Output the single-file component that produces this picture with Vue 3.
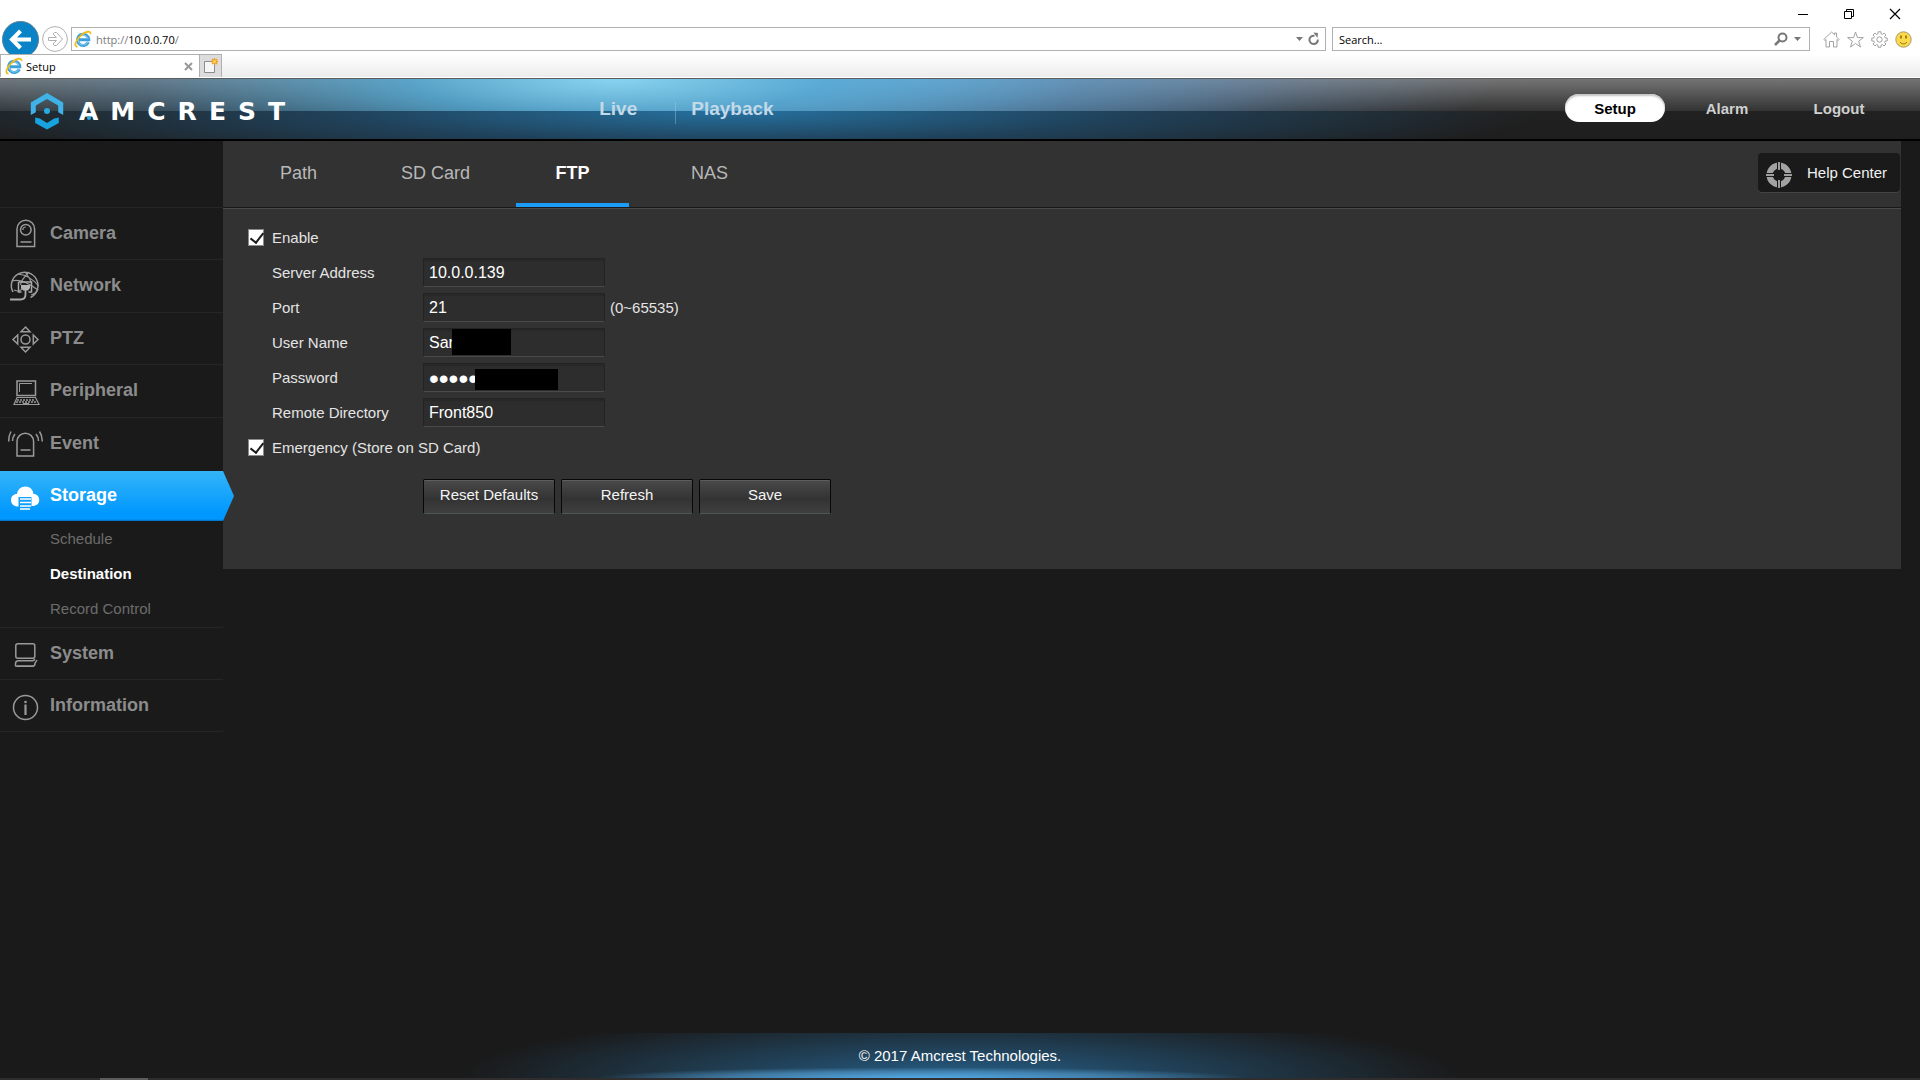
<script setup>
import { ref } from 'vue'

const brand = 'AMCREST'.split('')

const menuTop = ['Camera', 'Network', 'PTZ', 'Peripheral', 'Event', 'Storage', 'System', 'Information']
const submenu = ['Schedule', 'Destination', 'Record Control']
const tabs = ['Path', 'SD Card', 'FTP', 'NAS']

const activeMenu = 'Storage'
const activeSub = 'Destination'
const activeTab = 'FTP'

const address = ref('http://10.0.0.70/')
const form = ref({
  enable: true,
  server: '10.0.0.139',
  port: '21',
  user: 'San',
  password: '12345',
  directory: 'Front850',
  emergency: true,
})
</script>

<template>
  <div class="screen">
    <div class="browser">
      <div class="titlebar">
        <button class="win" aria-label="Minimize">
          <svg width="12" height="12" viewBox="0 0 12 12"><path d="M1 6.5h10" stroke="#000" /></svg>
        </button>
        <button class="win" aria-label="Restore">
          <svg width="12" height="12" viewBox="0 0 12 12" fill="none" stroke="#000"><path d="M1.5 3.5h7v7h-7zM3.5 3.5v-2h7v7h-2" /></svg>
        </button>
        <button class="win" aria-label="Close">
          <svg width="12" height="12" viewBox="0 0 12 12"><path d="M1 1l10 10M11 1L1 11" stroke="#000" stroke-width="1.2" /></svg>
        </button>
      </div>

      <div class="navrow">
        <button class="back" aria-label="Back">
          <svg width="37" height="37" viewBox="0 0 37 37">
            <circle cx="18.5" cy="18.5" r="18" fill="#0a84c6" stroke="#5b7f95" />
            <path d="M29 18.500H11M18.500 10l-8.500 8.500 8.500 8.500" fill="none" stroke="#fff" stroke-width="4" />
          </svg>
        </button>
        <button class="forward" aria-label="Forward">
          <svg width="26" height="26" viewBox="0 0 26 26" fill="none" stroke="#b0b0b0">
            <circle cx="13" cy="13" r="12.400" />
            <path d="M6.500 11.500h8l-3.500-3.500 1.500-1.500h2l6 6.500-6 6.500h-2l-1.500-1.500 3.500-3.500h-8z" />
          </svg>
        </button>
        <div class="field url">
          <svg class="ie" width="18" height="18" viewBox="0 0 18 18" fill="none">
            <path d="M14.300 12.200A5.600 5.600 0 1 1 14.800 9.800H5" stroke="#3a9fdc" stroke-width="3" />
            <path d="M13.800 11.900A5 5 0 1 1 14 8.800" stroke="#8dd0f5" />
            <path d="M3.500 16.500C-.5 17 1.500 10.500 6.500 5.800S17 .2 16.600 4.200" stroke="#f0bd1d" stroke-width="1.800" />
          </svg>
          <label class="urltext" for="address"><span>http://</span>10.0.0.70<span>/</span></label>
          <input id="address" v-model="address" class="ghost" aria-label="Address" />
          <svg width="9" height="6" viewBox="0 0 9 6"><path d="M1 1h7l-3.500 4z" fill="#777" /></svg>
          <svg width="12" height="14" viewBox="0 0 12 14" fill="none"><path d="M9.800 7.500A4.200 4.200 0 1 1 6.500 3.800" stroke="#777" stroke-width="2" /><path d="M5.500 .5l4.500 .5-.5 5z" fill="#777" /></svg>
        </div>
        <div class="field search">
          <input type="text" placeholder="Search..." aria-label="Search" />
          <svg width="14" height="14" viewBox="0 0 14 14" fill="none" stroke="#777" stroke-width="2"><circle cx="8.500" cy="5.500" r="4" /><path d="M5.500 8.500L1 13" stroke-width="2.500" /></svg>
          <svg width="9" height="6" viewBox="0 0 9 6"><path d="M1 1h7l-3.500 4z" fill="#777" /></svg>
        </div>
        <div class="tools">
          <button aria-label="Home">
            <svg width="17" height="17" viewBox="0 0 17 17" fill="#fff" stroke="#a3a3a3"><path d="M.8 8.500L8.500 1l3 2.800V2h2v3.800l2.700 2.700-1 1-1.200-1V16h-3.500v-5.500h-4V16H3V8.500l-1.200 1z" /></svg>
          </button>
          <button aria-label="Favorites">
            <svg width="17" height="17" viewBox="0 0 17 17" fill="#fff" stroke="#a3a3a3"><path d="M8.500 1l2 5.600h5.900l-4.700 3.600 1.800 5.800-5-3.500-5 3.500 1.800-5.800L.6 6.600h5.900z" /></svg>
          </button>
          <button aria-label="Tools">
            <svg width="17" height="17" viewBox="0 0 17 17" fill="#fff" stroke="#a3a3a3"><path d="M7 .8h3v2l1.500.6L13 2l2 2-1.400 1.500.6 1.500h2v3h-2l-.6 1.500L15 13l-2 2-1.500-1.400-1.500.6v2H7v-2l-1.500-.6L4 15l-2-2 1.400-1.500L2.800 10h-2V7h2l.6-1.500L2 4l2-2 1.500 1.400L7 2.800z" /><circle cx="8.500" cy="8.500" r="2.700" /></svg>
          </button>
          <button aria-label="Feedback">
            <svg width="17" height="17" viewBox="0 0 17 17"><circle cx="8.500" cy="8.500" r="7.700" fill="#fbd94a" stroke="#a59b6e" /><path d="M6 4.500v3M11 4.500v3" stroke="#8a6d12" stroke-width="1.600" /><path d="M5 11c2 2.500 5 2.500 7 0" fill="none" stroke="#8a6d12" /></svg>
          </button>
        </div>
      </div>

      <div class="tabstrip">
        <div class="pagetab">
          <svg class="ie" width="18" height="18" viewBox="0 0 18 18" fill="none">
            <path d="M14.300 12.200A5.600 5.600 0 1 1 14.800 9.800H5" stroke="#3a9fdc" stroke-width="3" />
            <path d="M13.800 11.900A5 5 0 1 1 14 8.800" stroke="#8dd0f5" />
            <path d="M3.500 16.500C-.5 17 1.500 10.500 6.500 5.800S17 .2 16.600 4.200" stroke="#f0bd1d" stroke-width="1.800" />
          </svg>
          <span>Setup</span>
          <button aria-label="Close tab">
            <svg width="9" height="9" viewBox="0 0 9 9"><path d="M1 1l7 7M8 1L1 8" stroke="#999" stroke-width="2" /></svg>
          </button>
        </div>
        <button class="newtab" aria-label="New tab">
          <svg width="16" height="18" viewBox="0 0 16 18" fill="none"><path d="M1.500 4.500h10v11h-10z" fill="#f6f6f6" stroke="#8d8d8d" /><path d="M11.500 1v7M8 4.500h7M9 2l5 5M14 2L9 7" stroke="#ef9a1a" stroke-width="1.300" /><circle cx="11.500" cy="4.500" r="1.500" fill="#ffd75a" /></svg>
        </button>
      </div>
    </div>

    <header class="header">
      <a class="logo" href="#" aria-label="Amcrest">
        <svg width="34" height="38" viewBox="0 0 34 38">
          <path d="M.8 23V10.500L17 1l16.200 9.500V23l-5-2.800v-6.700L17 7 5.800 13.500v6.700z" fill="#3fb2e8" />
          <path d="M5.200 25.500l4.600 1L17 31l7.200-4.500 4.600-1V31L17 37.500 5.200 31z" fill="#16a3e0" />
          <circle cx="17" cy="19" r="3" fill="#2aa9e3" />
        </svg>
        <span class="brand"><span v-for="(c, i) in brand" :key="i">{{ c }}</span></span>
      </a>
      <nav class="views">
        <a href="#">Live</a>
        <a href="#">Playback</a>
      </nav>
      <nav class="account">
        <a class="on" href="#">Setup</a>
        <a href="#">Alarm</a>
        <a href="#">Logout</a>
      </nav>
    </header>

    <div class="body">
      <aside class="sidebar">
        <ul class="menu">
          <li v-for="item in menuTop" :key="item">
            <a class="item" :class="{ active: item === activeMenu }" href="#">
              <svg class="icon" width="36" height="36" viewBox="0 0 36 36" fill="none" stroke="#9a9a9a" stroke-width="1.500">
                <template v-if="item === 'Camera'">
                  <path d="M9 30.500V13a8.800 8.800 0 0 1 17.600 0v17.500z" />
                  <circle cx="17.800" cy="13.800" r="5.300" />
                  <path d="M14.800 14a3 3 0 0 1 3-3" stroke-width="1.200" />
                  <path d="M12.500 26h11" />
                </template>
                <template v-else-if="item === 'Network'">
                  <path d="M5 24a13.300 13.300 0 1 1 17.500 5.500" />
                  <path d="M4 13c7-2 15 1 26 9M10 6c8 1 16 6 20.500 12M21 4c-5 5-8 9-8.500 13M17 4c4 5 6 8 6.500 12M6 22c5 2 7 1 9-3M23 27c4-1 6-3 7-6" stroke-width="1.200" />
                  <path d="M10.500 14h13v10h-3M10.500 14v10h3" stroke="#aaa" />
                  <path d="M13 17h9v3l-2 2.500h-5L13 20z" fill="#b5b5b5" stroke="none" />
                  <path d="M17.500 22v4.500q0 5-5 5H2" stroke="#aaa" stroke-width="1.800" />
                </template>
                <template v-else-if="item === 'PTZ'">
                  <circle cx="17.500" cy="18.500" r="4.500" />
                  <path d="M17.500 6l4.500 4.700h-9zM17.500 31l4.500-4.700h-9zM5 18.500l4.700-4.500v9zM30 18.500l-4.700-4.500v9z" />
                </template>
                <template v-else-if="item === 'Peripheral'">
                  <path d="M9 8h18.500v14.500H9z" />
                  <path d="M11.500 19v-8.500H24" stroke-width="1" />
                  <path d="M9 24.500h18.500l3.500 7H6z" stroke-width="1.200" />
                  <path d="M9 27h18M8 29h20" stroke-width="1.500" stroke-dasharray="2 1" />
                  <path d="M15 31h6" stroke-width="2" />
                </template>
                <template v-else-if="item === 'Event'">
                  <path d="M9 30V15.500a8.300 8.300 0 0 1 16.600 0V30z" />
                  <path d="M12.500 24h10M7 8q-2.500 3-2.500 7M3 5.500Q.5 10 .8 15.500M28 8q2.500 3 2.500 7M31.500 5.500q3 4.500 2.700 10" />
                </template>
                <template v-else-if="item === 'Storage'">
                  <path d="M9 28.500C5.500 28 3 25.500 3 22s2.500-6 6-6c.5-4.500 4-7.500 8.500-7.500S25 11.500 25.500 16c3.500 0 5.700 2.500 5.700 6S29 27.500 25.500 28h-2v-9H10.500v9.500z" fill="#fff" stroke="none" />
                  <path d="M12 21h11M12 24.500h11M12 28h11M12 31h10" stroke="#fff" stroke-width="1.500" />
                </template>
                <template v-else-if="item === 'System'">
                  <rect x="7.800" y="7.800" width="19" height="14.500" rx="2" />
                  <path d="M7.500 30.200v-2.500q0-3 3-3h14q2 0 2-2M9 30.200h15.500q2.500 0 2.500-3l2-3" />
                  <path d="M7.500 30.200h18" />
                </template>
                <template v-else>
                  <circle cx="17.500" cy="19.500" r="12" />
                  <path d="M17.500 16.500V27" stroke-width="2.200" />
                  <circle cx="17.500" cy="14" r="1.300" fill="#9a9a9a" stroke="none" />
                </template>
              </svg>
              <span>{{ item }}</span>
            </a>
            <ul v-if="item === activeMenu" class="submenu">
              <li v-for="s in submenu" :key="s"><a href="#" :class="{ on: s === activeSub }">{{ s }}</a></li>
            </ul>
          </li>
        </ul>
      </aside>

      <main class="panel">
        <div class="tabbar">
          <nav class="tabs">
            <a v-for="t in tabs" :key="t" href="#" :class="{ on: t === activeTab }">{{ t }}</a>
          </nav>
          <button class="help">
            <svg width="28" height="28" viewBox="0 0 28 28" fill="none">
              <circle cx="14" cy="14" r="9.500" stroke="#a2a2a2" stroke-width="6" />
              <path d="M14 1v8M14 19v8M1 14h8M19 14h8" stroke="#1a1a1a" stroke-width="4" />
              <path d="M14 1v8M14 19v8M1 14h8M19 14h8" stroke="#c8c8c8" stroke-width="1.500" />
            </svg>
            Help Center
          </button>
        </div>

        <form class="form" @submit.prevent>
          <div class="row check">
            <input id="enable" v-model="form.enable" type="checkbox" />
            <label for="enable">Enable</label>
          </div>
          <div class="row">
            <label for="server">Server Address</label>
            <div class="control"><input id="server" v-model="form.server" type="text" /></div>
          </div>
          <div class="row">
            <label for="port">Port</label>
            <div class="control"><input id="port" v-model="form.port" type="text" /></div>
            <span class="hint">(0~65535)</span>
          </div>
          <div class="row">
            <label for="user">User Name</label>
            <div class="control"><input id="user" v-model="form.user" type="text" /><span class="mask mask-user"></span></div>
          </div>
          <div class="row">
            <label for="password">Password</label>
            <div class="control"><input id="password" v-model="form.password" type="password" /><span class="mask mask-password"></span></div>
          </div>
          <div class="row">
            <label for="directory">Remote Directory</label>
            <div class="control"><input id="directory" v-model="form.directory" type="text" /></div>
          </div>
          <div class="row check">
            <input id="emergency" v-model="form.emergency" type="checkbox" />
            <label for="emergency">Emergency (Store on SD Card)</label>
          </div>
          <div class="actions">
            <button type="button">Reset Defaults</button>
            <button type="button">Refresh</button>
            <button type="submit">Save</button>
          </div>
        </form>
      </main>
    </div>

    <footer class="footer">© 2017 Amcrest Technologies.</footer>
    <div class="taskbar"><span></span></div>
  </div>
</template>

<style>
body {
  margin: 0;
  background: #1a1a1a;
}
</style>

<style scoped>
* {
  box-sizing: border-box;
}
.screen {
  display: flex;
  flex-direction: column;
  min-height: 100vh;
  font: 15px "Liberation Sans", Arial, sans-serif;
  color: #e4e4e4;
  background: #1a1a1a;
}
a {
  color: inherit;
  text-decoration: none;
}
button {
  padding: 0;
  border: 0;
  background: none;
  color: inherit;
  font: inherit;
}
ul {
  margin: 0;
  padding: 0;
  list-style: none;
}
svg {
  display: block;
  flex: none;
}

/* Browser frame */
.browser {
  background: #fff;
  color: #000;
  font: 11px "Open Sans", "Noto Sans", sans-serif;
}
.titlebar {
  display: flex;
  justify-content: flex-end;
  height: 27px;
  padding-right: 2px;
}
.win {
  display: grid;
  place-items: center;
  width: 46px;
  height: 28px;
}
.navrow {
  display: flex;
  align-items: center;
  height: 24px;
  padding: 0 5px 0 2px;
}
.back {
  margin-right: 3px;
}
.forward {
  margin-right: 3px;
}
.field {
  position: relative;
  display: flex;
  align-items: center;
  height: 24px;
  border: 1px solid #b0b0b0;
  background: #fff;
}
.url {
  flex: 1;
  gap: 4px;
  padding: 0 5px 0 2px;
}
.urltext span {
  color: #7a7a7a;
}
.field input {
  flex: 1;
  min-width: 0;
  padding: 0;
  border: 0;
  outline: 0;
  background: none;
  font: inherit;
}
.field .ghost {
  color: transparent;
  text-indent: 100%;
  overflow: hidden;
}
.search {
  width: 478px;
  gap: 5px;
  margin: 0 9px 0 6px;
  padding: 0 7px 0 6px;
}
.search input::placeholder {
  color: #000;
  opacity: 1;
}
.tools {
  display: flex;
}
.tools button {
  display: grid;
  place-items: center;
  width: 24px;
  height: 24px;
}
.tabstrip {
  position: relative;
  display: flex;
  height: 24px;
  margin-top: 3px;
  border-bottom: 1px solid #fff;
  background: linear-gradient(#fff, #ececec);
}
.pagetab {
  display: flex;
  align-items: center;
  gap: 3px;
  width: 200px;
  padding: 0 6px 0 4px;
  border: 1px solid #b0b0b0;
  border-bottom: 0;
  background: #fff;
}
.pagetab span {
  flex: 1;
}
.newtab {
  display: grid;
  place-items: center;
  width: 22px;
  border: 1px solid #b0b0b0;
  border-left: 0;
  border-bottom: 0;
  background: #dcdcdc;
}

/* Site header */
.header {
  position: relative;
  display: flex;
  align-items: center;
  justify-content: space-between;
  height: 63px;
  padding: 0 31px 0 30px;
  border-top: 1px solid #5c5c5c;
  border-bottom: 2px solid #000;
  background:
    radial-gradient(ellipse 36% 400% at 32% 0, rgba(136, 214, 242, .96), rgba(84, 176, 222, .78) 30%, rgba(76, 140, 185, .35) 68%, transparent) 0 0 / 100% 32px no-repeat,
    radial-gradient(ellipse 30% 300% at 48% 0, rgba(120, 185, 240, .7), rgba(110, 165, 220, .4) 50%, transparent) 0 0 / 100% 32px no-repeat,
    radial-gradient(ellipse 42% 230% at 38% 0, rgba(38, 116, 164, .97), rgba(32, 84, 122, .65) 48%, transparent) 0 100% / 100% 28px no-repeat,
    linear-gradient(#747474, #333 32px, #212121 32px, #1e1e1e);
}
.logo {
  display: flex;
  align-items: center;
  gap: 15px;
  padding-top: 4px;
}
.brand {
  display: flex;
  gap: 12px;
  font: bold 25px "DejaVu Sans", sans-serif;
  color: #fff;
}
.brand > span:first-child {
  position: relative;
}
.brand > span:first-child::after {
  content: "";
  position: absolute;
  left: 50%;
  bottom: 6px;
  width: 4px;
  height: 4px;
  margin-left: -2px;
  border-radius: 50%;
  background: #2aa9e3;
}
.views {
  position: absolute;
  left: 31%;
  top: 0;
  display: flex;
  padding-left: 4px;
  font-weight: bold;
  font-size: 19px;
  line-height: 60px;
  color: #c3d9e8;
}
.views a + a {
  margin-left: 38px;
  padding-left: 16px;
  background: linear-gradient(rgba(160, 205, 235, .4), rgba(160, 205, 235, .4)) 0 60% / 1px 22px no-repeat;
}
.account {
  display: flex;
  gap: 12px;
  padding-bottom: 2px;
  font-weight: bold;
  color: #d0d0d0;
}
.account a {
  width: 100px;
  height: 28px;
  border-radius: 14px;
  line-height: 30px;
  text-align: center;
}
.account .on {
  background: #fff;
  color: #000;
  box-shadow: inset 0 2px 2px #c4c4c4;
}

/* Sidebar */
.body {
  display: flex;
  align-items: flex-start;
  flex: 1;
}
.sidebar {
  flex: none;
  width: 223px;
  padding-top: 66px;
}
.menu {
  border-bottom: 1px solid #252525;
}
.item {
  display: flex;
  align-items: center;
  gap: 6px;
  height: 52px;
  padding-left: 8px;
  border-top: 1px solid #252525;
  color: #8c8c8c;
  font-weight: bold;
  font-size: 18px;
}
.menu > li:nth-child(2) > .item,
.menu > li:nth-child(4) > .item {
  height: 53px;
  padding-bottom: 1px;
}
.item.active {
  position: relative;
  z-index: 1;
  width: calc(100% + 11px);
  color: #fff;
  border-top-color: transparent;
}
.item.active::before {
  content: "";
  position: absolute;
  z-index: -1;
  inset: 1px 0 0;
  background: linear-gradient(#34b4f8, #0098ff 85%, #0098ff 96%, #0070c0);
  clip-path: polygon(0 0, 223px 0, 100% 50%, 223px 100%, 0 100%);
}
.submenu {
  padding-bottom: 1px;
}
.submenu a {
  display: block;
  padding-left: 50px;
  line-height: 35px;
  color: #6c6c6c;
}
.submenu .on {
  color: #fff;
  font-weight: bold;
}

/* Settings panel */
.panel {
  flex: 1;
  margin-right: 19px;
  background: #323232;
}
.tabbar {
  display: flex;
  justify-content: space-between;
  border-bottom: 1px solid #4a4a4a;
  box-shadow: inset 0 -1px #191919;
  padding-bottom: 1px;
}
.tabs {
  display: flex;
  gap: 24px;
  padding-left: 19px;
}
.tabs a {
  width: 113px;
  height: 66px;
  font-size: 18px;
  line-height: 64px;
  text-align: center;
  color: #b8b8b8;
}
.tabs .on {
  border-bottom: 4px solid #1c9cf6;
  color: #fff;
  font-weight: bold;
}
.help {
  display: flex;
  align-items: center;
  gap: 14px;
  height: 39px;
  margin: 12px 1px 0 0;
  padding: 0 13px 0 7px;
  border-radius: 4px;
  background: #1a1a1a;
  box-shadow: 0 1px #444;
  color: #f2f2f2;
}
.help svg {
  margin-top: 4px;
}
.form {
  padding: 11px 25px 55px;
}
.row {
  display: flex;
  align-items: center;
  height: 35px;
  padding-left: 24px;
}
.row > label {
  width: 151px;
}
.check {
  gap: 8px;
  padding-left: 0;
}
.row.check > label {
  width: auto;
}
.check input {
  appearance: none;
  width: 16px;
  height: 17px;
  margin: 0;
  border: 1px solid #8a8a8a;
  background: #fff;
}
.check input:checked::before {
  content: "";
  display: block;
  width: 6px;
  height: 11px;
  margin: 0 0 0 4px;
  border: solid #1c1c1c;
  border-width: 0 2px 2px 0;
  transform: rotate(38deg);
}
.control {
  position: relative;
}
.control input {
  display: block;
  width: 182px;
  height: 29px;
  padding: 0 5px;
  border: 1px solid #232323;
  border-bottom-color: #4a4a4a;
  outline: 0;
  background: #2d2d2d;
  box-shadow: inset 0 2px 1px #282828;
  color: #fff;
  font: 16px "Liberation Sans", Arial, sans-serif;
}
.control input[type="password"] {
  padding-top: 3px;
  font-size: 28px;
}
.mask {
  position: absolute;
  background: #000;
}
.mask-user {
  left: 29px;
  top: 1px;
  width: 59px;
  height: 26px;
}
.mask-password {
  left: 52px;
  top: 6px;
  width: 83px;
  height: 21px;
}
.hint {
  margin-left: 5px;
}
.actions {
  display: flex;
  gap: 6px;
  padding: 14px 0 0 175px;
}
.actions button {
  width: 132px;
  height: 35px;
  padding-bottom: 4px;
  border: 1px solid #080808;
  border-bottom-color: #4b5856;
  border-radius: 2px;
  background: linear-gradient(#4a4a4a, #333 58%, #3f3f3f);
  box-shadow: inset 0 1px #5e5e5e;
  color: #f4f4f4;
}

/* Footer */
.footer {
  height: 45px;
  line-height: 46px;
  text-align: center;
  color: #fff;
  background:
    radial-gradient(ellipse 17% 24% at 48% 100%, rgba(84, 172, 232, .98), rgba(80, 150, 200, .65) 60%, transparent) no-repeat,
    radial-gradient(ellipse 26% 150% at 50% 100%, #265f88, rgba(36, 84, 118, .65) 45%, transparent) no-repeat;
}
.taskbar {
  height: 2px;
  padding-left: 100px;
  background: #302d2e;
}
.taskbar span {
  display: block;
  width: 48px;
  height: 2px;
  background: #5c5c5c;
}
</style>
